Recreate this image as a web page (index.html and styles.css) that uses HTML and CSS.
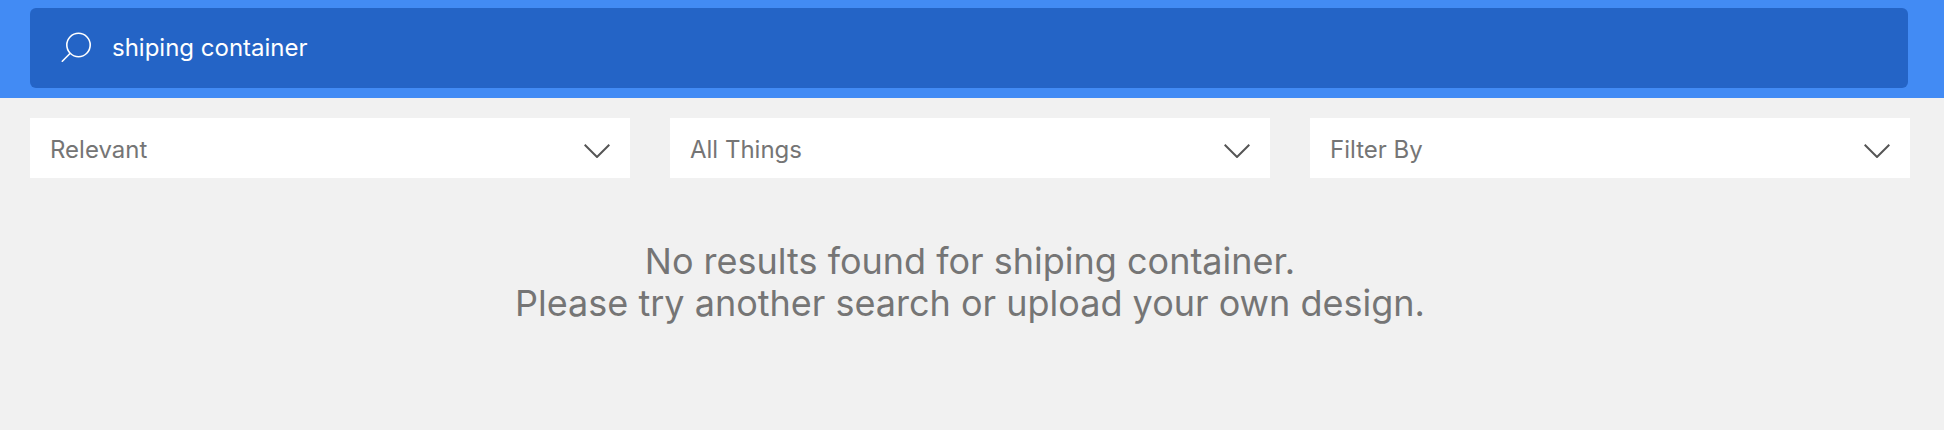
FILE: index.html
```
<!DOCTYPE html>
<html lang="en">
<head>
  <meta charset="UTF-8">
  <title>Search</title>
  <meta name="viewport" content="width=device-width, initial-scale=1.0">
  <link rel="stylesheet" href="styles.css">
</head>

<body>
  <header class="header">
    <form class="search" role="search">
      <svg class="search-icon" viewBox="0 0 30 30" aria-hidden="true">
        <circle cx="17.5" cy="13" r="11.7"/>
        <path d="M9.2 21.3L0.8 29.7"/>
      </svg>
      <input class="search-input" type="text" aria-label="Search" value="shiping container">
    </form>
  </header>

  <main class="content">
    <div class="filters">
      <div class="filter">
        <select class="filter-select" aria-label="Sort">
          <option>Relevant</option>
        </select>
        <svg class="filter-arrow" viewBox="0 0 26 14" aria-hidden="true"><path d="M0.7 0.7L13 13L25.3 0.7"/></svg>
      </div>
      <div class="filter">
        <select class="filter-select" aria-label="Type">
          <option>All Things</option>
        </select>
        <svg class="filter-arrow" viewBox="0 0 26 14" aria-hidden="true"><path d="M0.7 0.7L13 13L25.3 0.7"/></svg>
      </div>
      <div class="filter">
        <select class="filter-select" aria-label="Filter">
          <option>Filter By</option>
        </select>
        <svg class="filter-arrow" viewBox="0 0 26 14" aria-hidden="true"><path d="M0.7 0.7L13 13L25.3 0.7"/></svg>
      </div>
    </div>

    <p class="no-results">
      No results found for shiping container.<br>
      Please try another search or upload your own design.
    </p>
  </main>
</body>
</html>
```
FILE: styles.css
```
* {
  box-sizing: border-box;
}

body {
  margin: 0;
  font-family: Inter, "Liberation Sans", sans-serif;
  background-color: #f1f1f1;
  color: #757575;
}

.header {
  padding: 8px 36px 10px 30px;
  background-color: #428bf4;
}

.search {
  display: flex;
  align-items: center;
  gap: 21px;
  height: 80px;
  padding: 0 31px 2px;
  border-radius: 6px;
  background-color: #2464c6;
}

.search-icon {
  flex: none;
  width: 30px;
  height: 30px;
  fill: none;
  stroke: #fff;
  stroke-width: 1.6;
}

.search-input {
  flex: 1;
  min-width: 0;
  padding: 0;
  border: 0;
  outline: 0;
  background: none;
  color: #fff;
  font: 24px Inter, "Liberation Sans", sans-serif;
}

.content {
  padding: 20px 34px 0 30px;
}

.filters {
  display: grid;
  grid-template-columns: repeat(3, 1fr);
  gap: 40px;
}

/* select and arrow share one cell */
.filter {
  display: grid;
  align-items: center;
  background-color: #fff;
}

.filter-select,
.filter-arrow {
  grid-area: 1 / 1;
}

.filter-select {
  width: 100%;
  height: 60px;
  padding: 2px 60px 0 20px;
  border: 0;
  border-radius: 0;
  appearance: none;
  background: none;
  color: #757575;
  font: 24px Inter, "Liberation Sans", sans-serif;
}

.filter-arrow {
  justify-self: end;
  width: 26px;
  height: 14px;
  margin: 6px 20px 0 0;
  fill: none;
  stroke: #555;
  stroke-width: 2;
  pointer-events: none;
}

.no-results {
  margin: 62px 0 0;
  font-size: 36px;
  line-height: 42px;
  text-align: center;
}
```
